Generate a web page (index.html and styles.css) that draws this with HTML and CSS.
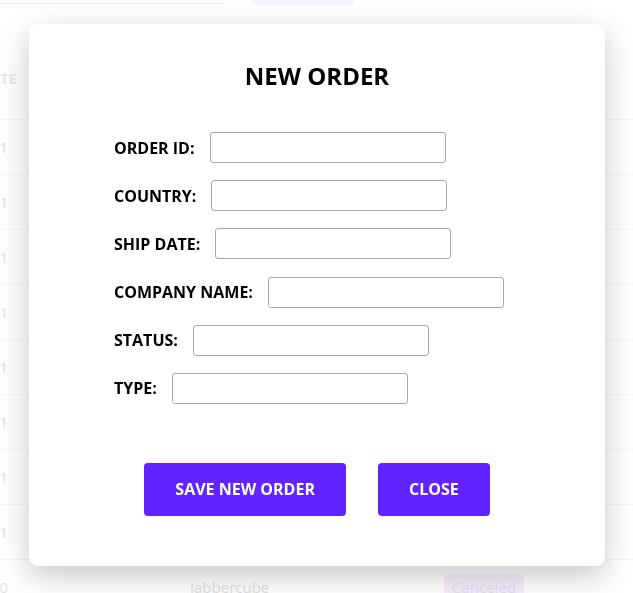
FILE: index.html
```html
<!DOCTYPE html>
<html lang="en">
<head>
<meta charset="utf-8">
<title>New Order</title>
<link rel="stylesheet" href="styles.css">
</head>
<body>
<div class="page">
  <div class="toolbar">
    <div class="search"></div>
    <div class="chip"></div>
  </div>
  <div class="table">
    <div class="row head"><div class="c1"><span>DATE</span></div><div class="c2"></div><div class="c3"></div></div>
    <div class="row"><div class="c1"><span>12/2021</span></div><div class="c2">Skinix</div><div class="c3"><span class="badge">Shipped</span></div></div>
    <div class="row"><div class="c1"><span>11/2021</span></div><div class="c2">Yodel</div><div class="c3"><span class="badge">Pending</span></div></div>
    <div class="row"><div class="c1"><span>10/2021</span></div><div class="c2">Oyoyo</div><div class="c3"><span class="badge">Shipped</span></div></div>
    <div class="row"><div class="c1"><span>09/2021</span></div><div class="c2">Feedfire</div><div class="c3"><span class="badge">Pending</span></div></div>
    <div class="row"><div class="c1"><span>08/2021</span></div><div class="c2">Zoomzone</div><div class="c3"><span class="badge">Shipped</span></div></div>
    <div class="row"><div class="c1"><span>3/2021</span></div><div class="c2">Realbuzz</div><div class="c3"><span class="badge">Pending</span></div></div>
    <div class="row"><div class="c1"><span>05/2021</span></div><div class="c2">Trudeo</div><div class="c3"><span class="badge">Shipped</span></div></div>
    <div class="row"><div class="c1"><span>04/2021</span></div><div class="c2">Quatz</div><div class="c3"><span class="badge">Shipped</span></div></div>
    <div class="row"><div class="c1"><span>2020</span></div><div class="c2">Jabbercube</div><div class="c3"><span class="badge">Canceled</span></div></div>
  </div>
</div>

<div class="overlay">
  <div class="modal">
    <h2 class="title">NEW ORDER</h2>
    <form class="form">
      <div class="field"><label>ORDER ID:</label><input type="text"></div>
      <div class="field"><label>COUNTRY:</label><input type="text"></div>
      <div class="field"><label>SHIP DATE:</label><input type="text"></div>
      <div class="field"><label>COMPANY NAME:</label><input type="text"></div>
      <div class="field"><label>STATUS:</label><input type="text"></div>
      <div class="field"><label>TYPE:</label><input type="text"></div>
    </form>
    <div class="actions">
      <button class="btn save" type="button">SAVE NEW ORDER</button>
      <button class="btn close" type="button">CLOSE</button>
    </div>
  </div>
</div>
</body>
</html>
```

FILE: styles.css
```css
html, body {
  margin: 0;
  padding: 0;
  height: 100%;
  overflow: hidden;
  background: #ffffff;
  font-family: "Open Sans", "Noto Sans", sans-serif;
}

.page {
  height: 100%;
  color: #d6d6d6;
}

.toolbar {
  height: 55px;
  display: flex;
  align-items: flex-start;
}

.search {
  width: 225px;
  height: 3px;
  border-bottom: 1px solid #ececec;
}

.chip {
  margin-left: 25px;
  margin-top: -20px;
  width: 105px;
  height: 25px;
  border-radius: 6px;
  background: #f3effd;
}

.row {
  height: 55px;
  display: grid;
  grid-template-columns: 8px 436px auto;
  align-items: center;
  border-bottom: 1px solid #f0f0f0;
  box-sizing: border-box;
  font-size: 15px;
}

.row.head {
  height: 65px;
  grid-template-columns: 17px 427px auto;
  align-items: start;
  padding-top: 13px;
  font-weight: 700;
  font-size: 15px;
  color: #e2e2e2;
}

.c1 {
  display: flex;
  justify-content: flex-end;
  white-space: nowrap;
  overflow: visible;
}

.c2 {
  padding-left: 182px;
  white-space: nowrap;
}

.c3 {
  white-space: nowrap;
}

.badge {
  display: inline-block;
  padding: 3px 8px;
  border-radius: 5px;
  background: #f2e8fb;
  color: #ddd2ea;
}

.overlay {
  position: fixed;
  inset: 0;
  background: rgba(255, 255, 255, 0.25);
  display: flex;
  justify-content: center;
  align-items: flex-start;
  padding-top: 24px;
}

.modal {
  width: 576px;
  margin-left: 1px;
  box-sizing: border-box;
  background: #ffffff;
  border-radius: 9px;
  box-shadow: 0 10px 30px rgba(0, 0, 0, 0.22);
  padding: 38px 40px 50px 85px;
}

.title {
  margin: 0;
  text-align: center;
  margin-left: -45px;
  font-size: 24px;
  line-height: 28px;
  font-weight: 700;
  color: #000000;
}

.form {
  margin-top: 42px;
  display: flex;
  flex-direction: column;
  gap: 17.2px;
}

.field {
  display: flex;
  align-items: center;
  gap: 15px;
}

.field label {
  font-size: 16px;
  font-weight: 700;
  color: #000000;
  white-space: nowrap;
}

.field input {
  width: 236px;
  height: 31px;
  box-sizing: border-box;
  border: 1px solid #a9a9a9;
  border-radius: 3px;
  background: #ffffff;
  margin: 0;
  padding: 0 6px;
}

.actions {
  margin-top: 59px;
  margin-left: -45px;
  display: flex;
  justify-content: center;
  gap: 32px;
}

.btn {
  height: 53px;
  padding: 0 31px;
  border: none;
  border-radius: 4px;
  background: #6123ff;
  color: #ffffff;
  font-family: "Open Sans", "Noto Sans", sans-serif;
  font-size: 16px;
  font-weight: 700;
  cursor: pointer;
}
```
